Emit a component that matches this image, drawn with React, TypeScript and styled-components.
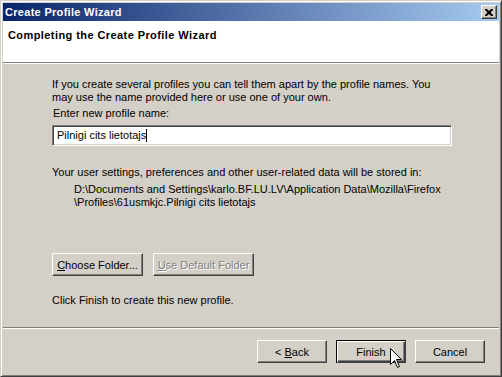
import React from "react";
import styled, { createGlobalStyle } from "styled-components";

const Global = createGlobalStyle`
  html, body { margin: 0; padding: 0; background: #d4d0c8; }
  body { font-family: Tahoma, "Liberation Sans", "DejaVu Sans", sans-serif; font-size: 11px; }
`;

const Window = styled.div`
  width: 502px;
  height: 377px;
  box-sizing: border-box;
  background: #d4d0c8;
  border-top: 1px solid #d4d0c8;
  border-left: 1px solid #d4d0c8;
  border-right: 1px solid #404040;
  border-bottom: 1px solid #404040;
  box-shadow: inset 1px 1px 0 #ffffff, inset -1px -1px 0 #808080;
  padding: 2px;
  display: flex;
  flex-direction: column;
  color: #000;
  font-family: "Liberation Sans", sans-serif;
  font-size: 11px;
`;

const TitleBar = styled.div`
  height: 18px;
  flex: none;
  display: flex;
  align-items: center;
  justify-content: space-between;
  padding: 0 2px 0 2px;
  background: linear-gradient(to right, #0a246a, #a6caf0);
`;

const TitleText = styled.span`
  color: #fff;
  font-weight: bold;
  font-size: 11px;
  letter-spacing: 0.3px;
`;

const CloseButton = styled.div`
  width: 16px;
  height: 14px;
  box-sizing: border-box;
  background: #d4d0c8;
  border-top: 1px solid #fff;
  border-left: 1px solid #fff;
  border-right: 1px solid #404040;
  border-bottom: 1px solid #404040;
  box-shadow: inset -1px -1px 0 #808080;
  display: flex;
  align-items: center;
  justify-content: center;
`;

const Header = styled.div`
  height: 42px;
  flex: none;
  background: #fff;
  padding: 8px 0 0 5px;
  box-sizing: border-box;
  border-bottom: 1px solid #808080;
  box-shadow: 0 1px 0 #fff;
`;

const HeaderTitle = styled.div`
  font-weight: bold;
  font-size: 11px;
  line-height: 13px;
  letter-spacing: 0.42px;
`;

const Body = styled.div`
  flex: 1;
  display: flex;
  flex-direction: column;
  padding: 14px 49px 0 49px;
  margin-top: 1px;
  border-bottom: 1px solid #808080;
  box-shadow: 0 1px 0 #fff;
`;

const Text = styled.div<{ $top?: number; $indent?: number }>`
  line-height: 13px;
  margin-top: ${(p) => p.$top ?? 0}px;
  padding-left: ${(p) => p.$indent ?? 0}px;
  white-space: pre-line;
`;

const Input = styled.div`
  margin-top: 5px;
  height: 21px;
  width: 400px;
  box-sizing: border-box;
  background: #fff;
  border-top: 1px solid #808080;
  border-left: 1px solid #808080;
  border-right: 1px solid #fff;
  border-bottom: 1px solid #fff;
  box-shadow: inset 1px 1px 0 #404040, inset -1px -1px 0 #d4d0c8;
  padding: 3px 4px;
  line-height: 13px;
  display: flex;
  align-items: center;
`;

const Caret = styled.span`
  display: inline-block;
  width: 1px;
  height: 13px;
  background: #000;
`;

const ButtonRow = styled.div<{ $top: number; $gap: number }>`
  display: flex;
  gap: ${(p) => p.$gap}px;
  margin-top: ${(p) => p.$top}px;
`;

const Button = styled.div<{ $w: number; $disabled?: boolean; $default?: boolean }>`
  width: ${(p) => p.$w}px;
  height: 23px;
  box-sizing: border-box;
  display: flex;
  align-items: center;
  justify-content: center;
  background: #d4d0c8;
  border: 1px solid ${(p) => (p.$default ? "#000" : "transparent")};
  border-top-color: ${(p) => (p.$default ? "#000" : "#fff")};
  border-left-color: ${(p) => (p.$default ? "#000" : "#fff")};
  border-right-color: #404040;
  border-bottom-color: #404040;
  box-shadow: ${(p) =>
    p.$default
      ? "inset 1px 1px 0 #fff, inset -1px -1px 0 #404040, inset -2px -2px 0 #808080"
      : "inset -1px -1px 0 #808080"};
  color: ${(p) => (p.$disabled ? "#808080" : "#000")};
  text-shadow: ${(p) => (p.$disabled ? "1px 1px 0 #fff" : "none")};
  position: relative;
`;

const Footer = styled.div`
  height: 45px;
  flex: none;
  display: flex;
  justify-content: flex-end;
  align-items: flex-start;
  padding: 11px 14px 0 0;
  box-sizing: border-box;
  margin-top: 1px;
  gap: 9px;
`;

const Cursor = styled.svg`
  position: absolute;
  left: 53px;
  top: 7px;
`;

export default function App() {
  return (
    <>
      <Global />
      <Window>
        <TitleBar>
          <TitleText>Create Profile Wizard</TitleText>
          <CloseButton>
            <svg width="8" height="7" viewBox="0 0 8 7">
              <path d="M0 0h2l2 2 2-2h2v1l-2.5 2.5L8 6v1H6L4 5 2 7H0V6l2.5-2.5L0 1z" fill="#000" />
            </svg>
          </CloseButton>
        </TitleBar>
        <Header>
          <HeaderTitle>Completing the Create Profile Wizard</HeaderTitle>
        </Header>
        <Body>
          <Text>
            {"If you create several profiles you can tell them apart by the profile names. You\nmay use the name provided here or use one of your own."}
          </Text>
          <Text $top={3} $indent={1}>Enter new profile name:</Text>
          <Input>
            Pilnigi cits lietotajs
            <Caret />
          </Input>
          <Text $top={20}>Your user settings, preferences and other user-related data will be stored in:</Text>
          <Text $top={4} $indent={22}>
            {"D:\\Documents and Settings\\karlo.BF.LU.LV\\Application Data\\Mozilla\\Firefox\n\\Profiles\\61usmkjc.Pilnigi cits lietotajs"}
          </Text>
          <ButtonRow $top={44} $gap={10}>
            <Button $w={91}>
              <span><u>C</u>hoose Folder...</span>
            </Button>
            <Button $w={101} $disabled>
              <span><u>U</u>se Default Folder</span>
            </Button>
          </ButtonRow>
          <Text $top={18}>Click Finish to create this new profile.</Text>
        </Body>
        <Footer>
          <Button $w={70}>
            <span>&lt; <u>B</u>ack</span>
          </Button>
          <Button $w={70} $default>
            <span>Finish</span>
            <Cursor width="13" height="21" viewBox="0 0 13 21">
              <path
                d="M0.5 0.5 L0.5 16.5 L4.5 12.5 L7.5 19.5 L9.5 18.5 L6.5 11.5 L11.5 11.5 Z"
                fill="#fff"
                stroke="#000"
                strokeWidth="1"
              />
            </Cursor>
          </Button>
          <Button $w={70}>
            <span>Cancel</span>
          </Button>
        </Footer>
      </Window>
    </>
  );
}
